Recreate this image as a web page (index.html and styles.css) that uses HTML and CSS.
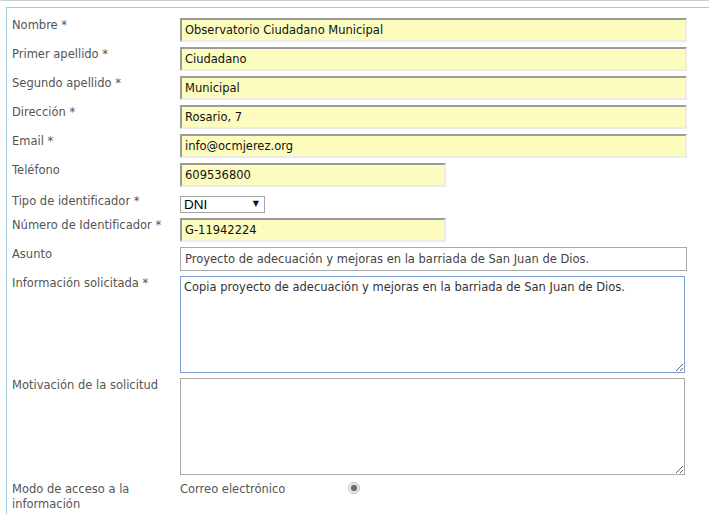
FILE: index.html
```html
<!DOCTYPE html>
<html lang="es">
<head>
<meta charset="utf-8">
<title>Solicitud</title>
<link rel="stylesheet" href="styles.css">
</head>
<body>
<div class="page">
  <div class="panel">
    <form class="form">
      <label class="lbl">Nombre *</label>
      <div class="field"><input class="txt req wide" value="Observatorio Ciudadano Municipal"></div>

      <label class="lbl">Primer apellido *</label>
      <div class="field"><input class="txt req wide" value="Ciudadano"></div>

      <label class="lbl">Segundo apellido *</label>
      <div class="field"><input class="txt req wide" value="Municipal"></div>

      <label class="lbl">Dirección *</label>
      <div class="field"><input class="txt req wide" value="Rosario, 7"></div>

      <label class="lbl">Email *</label>
      <div class="field"><input class="txt req wide" value="info@ocmjerez.org"></div>

      <label class="lbl">Teléfono</label>
      <div class="field"><input class="txt req short" value="609536800"></div>

      <label class="lbl lbl-sel">Tipo de identificador *</label>
      <div class="field sel-field">
        <span class="sel-wrap"><select class="sel"><option>DNI</option></select></span>
      </div>

      <label class="lbl">Número de Identificador *</label>
      <div class="field"><input class="txt req short" value="G-11942224"></div>

      <label class="lbl">Asunto</label>
      <div class="field"><input class="txt plain wide" value="Proyecto de adecuación y mejoras en la barriada de San Juan de Dios."></div>

      <label class="lbl">Información solicitada *</label>
      <div class="field"><textarea class="area focus">Copia proyecto de adecuación y mejoras en la barriada de San Juan de Dios.</textarea></div>

      <label class="lbl">Motivación de la solicitud</label>
      <div class="field"><textarea class="area"></textarea></div>

      <label class="lbl lbl-two">Modo de acceso a la información</label>
      <div class="field radio-row">
        <span class="opt">Correo electrónico</span>
        <span class="radio"><span class="dot"></span></span>
      </div>
    </form>
  </div>
</div>
</body>
</html>
```

FILE: styles.css
```css
html, body {
  margin: 0;
  padding: 0;
  background: #fff;
}
body {
  font-family: "DejaVu Sans", Verdana, sans-serif;
  font-size: 11.5px;
  color: #555;
  overflow: hidden;
}
.page {
  border-top: 1px solid #cfcfcf;
  height: 513px;
  overflow: hidden;
}
.panel {
  margin: 6px 0 0 6px;
  border-top: 1px solid #a3c9de;
  border-left: 1px solid #a3c9de;
  padding: 10px 0 20px 5px;
}
.form {
  display: grid;
  grid-template-columns: 168px 507px;
  row-gap: 5px;
  align-items: start;
}
.lbl {
  display: block;
  line-height: 14px;
  padding-top: 0;
  color: #555;
}
.lbl-sel {
  padding-top: 2px;
}
.lbl-two {
  line-height: 15px;
  padding-top: 2px;
  width: 130px;
}
.field {
  display: flex;
}
.txt {
  box-sizing: border-box;
  height: 24px;
  margin: 0;
  padding: 0 3px;
  font-family: "DejaVu Sans", Verdana, sans-serif;
  font-size: 11.5px;
  color: #111;
  outline: none;
}
.req {
  background: #fcfcbe;
  border: 2px solid;
  border-color: #9b9b9b #ebebeb #ebebeb #9b9b9b;
}
.plain {
  background: #fff;
  border: 1px solid #a9a9a9;
  padding: 0 4px;
  color: #444;
}
.wide {
  width: 507px;
}
.short {
  width: 266px;
}
.sel-field {
  padding-top: 4px;
}
.sel-wrap {
  position: relative;
  display: inline-block;
}
.sel-wrap::after {
  content: "▼";
  position: absolute;
  right: 6px;
  top: 3px;
  font-size: 8px;
  color: #111;
  pointer-events: none;
}
.sel {
  appearance: none;
  -webkit-appearance: none;
  box-sizing: border-box;
  width: 85px;
  height: 17px;
  margin: 0;
  padding: 0 0 0 3px;
  border: 1px solid #a6a6a6;
  background: #fff;
  font-family: "Liberation Sans", Arial, sans-serif;
  font-size: 13.5px;
  line-height: 15px;
  color: #000;
  border-radius: 0;
}
.area {
  box-sizing: border-box;
  display: block;
  width: 505px;
  height: 97px;
  margin: 0;
  padding: 3px 3px;
  border: 1px solid #a9a9a9;
  font-family: "DejaVu Sans", Verdana, sans-serif;
  font-size: 11.5px;
  color: #333;
  resize: vertical;
  outline: none;
}
.area.focus {
  border-color: #7ea0da;
}
.radio-row {
  align-items: center;
  padding-top: 2px;
}
.opt {
  width: 168px;
  color: #555;
}
.radio {
  box-sizing: border-box;
  width: 12px;
  height: 12px;
  border-radius: 50%;
  border: 1px solid #c3c3c3;
  background: #f2f2f2;
  display: flex;
  align-items: center;
  justify-content: center;
  margin-top: -2px;
}
.dot {
  width: 6px;
  height: 6px;
  border-radius: 50%;
  background: #6b6b6b;
  box-shadow: 0 0 0 1px #d8d8d8;
}
```
